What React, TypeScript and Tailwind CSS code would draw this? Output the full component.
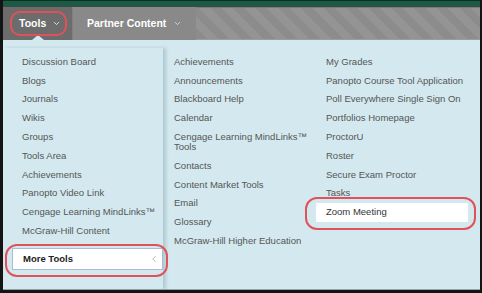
import React from 'react';
import { ChevronDown, ChevronLeft } from 'lucide-react';

const colOne = [
  'Discussion Board',
  'Blogs',
  'Journals',
  'Wikis',
  'Groups',
  'Tools Area',
  'Achievements',
  'Panopto Video Link',
  'Cengage Learning MindLinks™',
  'McGraw-Hill Content',
];

const colTwo = [
  'Achievements',
  'Announcements',
  'Blackboard Help',
  'Calendar',
  'Cengage Learning MindLinks™|Tools',
  'Contacts',
  'Content Market Tools',
  'Email',
  'Glossary',
  'McGraw-Hill Higher Education',
];

const colThree = [
  'My Grades',
  'Panopto Course Tool Application',
  'Poll Everywhere Single Sign On',
  'Portfolios Homepage',
  'ProctorU',
  'Roster',
  'Secure Exam Proctor',
  'Tasks',
  'Zoom Meeting',
];

const MenuItem = ({ label, active, className = '' }: { label: string; active?: boolean; className?: string }) => {
  const lines = label.split('|');
  return (
    <li
      className={`py-[4.4px] leading-[10px] whitespace-nowrap ${className} ${
        active ? 'bg-white text-[#333]' : 'text-[#555]'
      }`}
    >
      {lines.map((line, i) => (
        <div key={i}>{line}</div>
      ))}
    </li>
  );
};

const App = () => {
  return (
    <div className="relative w-[482px] h-[293px] bg-[#141414] pl-[3px] pr-[2px] pb-[3px] flex flex-col font-['Liberation_Sans',Arial,sans-serif] overflow-hidden">
      {/* top strip */}
      <div className="h-[7px] bg-[#1b5a44] border-t border-[#0e2e23] border-b border-b-[#3c4a45]" />

      {/* nav bar */}
      <div className="h-[33px] flex">
        <div className="relative w-[70px] bg-[#6c6c6c] border-r border-[#808080] flex items-center pl-[16px] gap-[6px] text-white font-bold text-[10.5px]">
          <span>Tools</span>
          <ChevronDown size={9} strokeWidth={2.5} className="text-[#e6e6e6]" />
          <div className="absolute left-[29px] bottom-0 w-0 h-0 border-x-[6px] border-x-transparent border-b-[5px] border-b-[#d3e9ef]" />
        </div>
        <div className="w-[123px] bg-[#898989] flex items-center pl-[14px] gap-[7px] text-white font-bold text-[10.5px]">
          <span>Partner Content</span>
          <ChevronDown size={9} strokeWidth={2} className="text-[#e6e6e6]" />
        </div>
        <div className="flex-1 border-t border-[#7a7a7a] border-b border-b-[#9c9c9c] bg-[repeating-linear-gradient(45deg,#8c8c8c_0px,#8c8c8c_8px,#949494_8px,#949494_16px)]" />
      </div>

      {/* menu panel */}
      <div className="flex-1 flex bg-[#d3e9ef] border-b border-[#98a5a9] text-[9.5px]">
        <div className="w-[160px] mt-[8px] shadow-[3px_0_3px_rgba(80,110,120,0.25)] flex flex-col">
          <ul className="pl-[19px] pt-[4.5px]">
            {colOne.map((item) => (
              <MenuItem key={item} label={item} />
            ))}
          </ul>
          <div className="ml-[9px] mt-[7.5px] h-[22px] bg-white border border-[#a9bcd6] flex items-center justify-between pl-[10px] pr-[3px]">
            <span className="font-bold text-[#222]">More Tools</span>
            <ChevronLeft size={10} strokeWidth={1.5} className="text-[#888]" />
          </div>
        </div>

        <ul className="w-[153px] pt-[12.5px] pl-[11px]">
          {colTwo.map((item) => (
            <MenuItem key={item} label={item} />
          ))}
        </ul>

        <ul className="w-[152px] pt-[12.5px]">
          {colThree.map((item) => (
            <MenuItem key={item} label={item} className="px-[10px]" active={item === 'Zoom Meeting'} />
          ))}
        </ul>
      </div>

      {/* annotation outlines */}
      <div className="absolute left-[10px] top-[11px] w-[57px] h-[25px] border-2 border-[#e0525b] rounded-[10px]" />
      <div className="absolute left-[5px] top-[244px] w-[163px] h-[33px] border-2 border-[#e0525b] rounded-[12px]" />
      <div className="absolute left-[305px] top-[197px] w-[171px] h-[33px] border-2 border-[#e0525b] rounded-[12px]" />
    </div>
  );
};

export default App;
